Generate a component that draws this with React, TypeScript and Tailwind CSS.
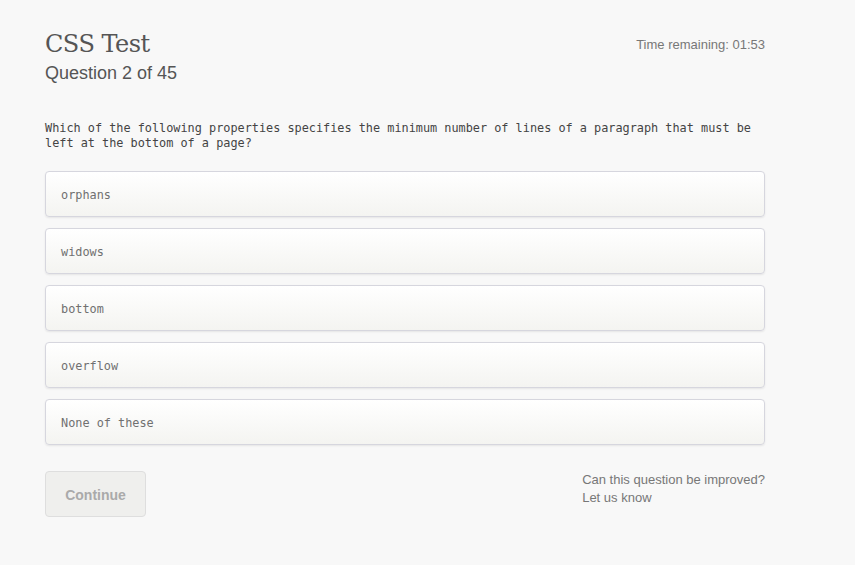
import React from 'react'

const OPTIONS = ['orphans', 'widows', 'bottom', 'overflow', 'None of these']

const mono = { fontFamily: '"DejaVu Sans Mono", "Liberation Mono", monospace' }

export default function App() {
  return (
    <div className="min-h-[565px] w-full bg-[#f8f8f8] font-['Liberation_Sans',Arial,sans-serif]">
      <div className="w-[720px] ml-[45px] pt-[29px]">
        <div className="flex items-start justify-between">
          <div>
            <h1 className="font-['DejaVu_Serif',serif] text-[24px] leading-[30px] text-[#555] tracking-[-0.5px]">
              CSS Test
            </h1>
            <p className="text-[18px] leading-[22px] text-[#555] mt-[3px]">
              Question 2 of 45
            </p>
          </div>
          <div className="text-[13px] text-[#777] mt-[6px]">Time remaining: 01:53</div>
        </div>

        <p
          className="mt-[37px] text-[11.85px] leading-[15px] text-[#444]"
          style={mono}
        >
          Which of the following properties specifies the minimum number of lines of a paragraph
          that must be left at the bottom of a page?
        </p>

        <div className="mt-[20px] flex flex-col gap-[11px]">
          {OPTIONS.map((option) => (
            <div
              key={option}
              className="h-[46px] flex items-center px-[15px] pt-[3px] rounded-[4px] border border-[#d6d6de] bg-gradient-to-b from-[#ffffff] to-[#f4f4f1] shadow-[0_1px_2px_rgba(0,0,0,0.08)] text-[11.85px] text-[#707070]"
              style={mono}
            >
              {option}
            </div>
          ))}
        </div>

        <div className="mt-[26px] flex items-start justify-between">
          <button className="w-[101px] h-[46px] pt-[2px] rounded-[4px] border border-[#dedede] bg-[#efefed] text-[14px] font-bold text-[#aaa]">
            Continue
          </button>
          <div className="text-[13px] leading-[18px] text-[#777] mt-[0px] whitespace-nowrap">
            <div>Can this question be improved?</div>
            <div>Let us know</div>
          </div>
        </div>
      </div>
    </div>
  )
}
